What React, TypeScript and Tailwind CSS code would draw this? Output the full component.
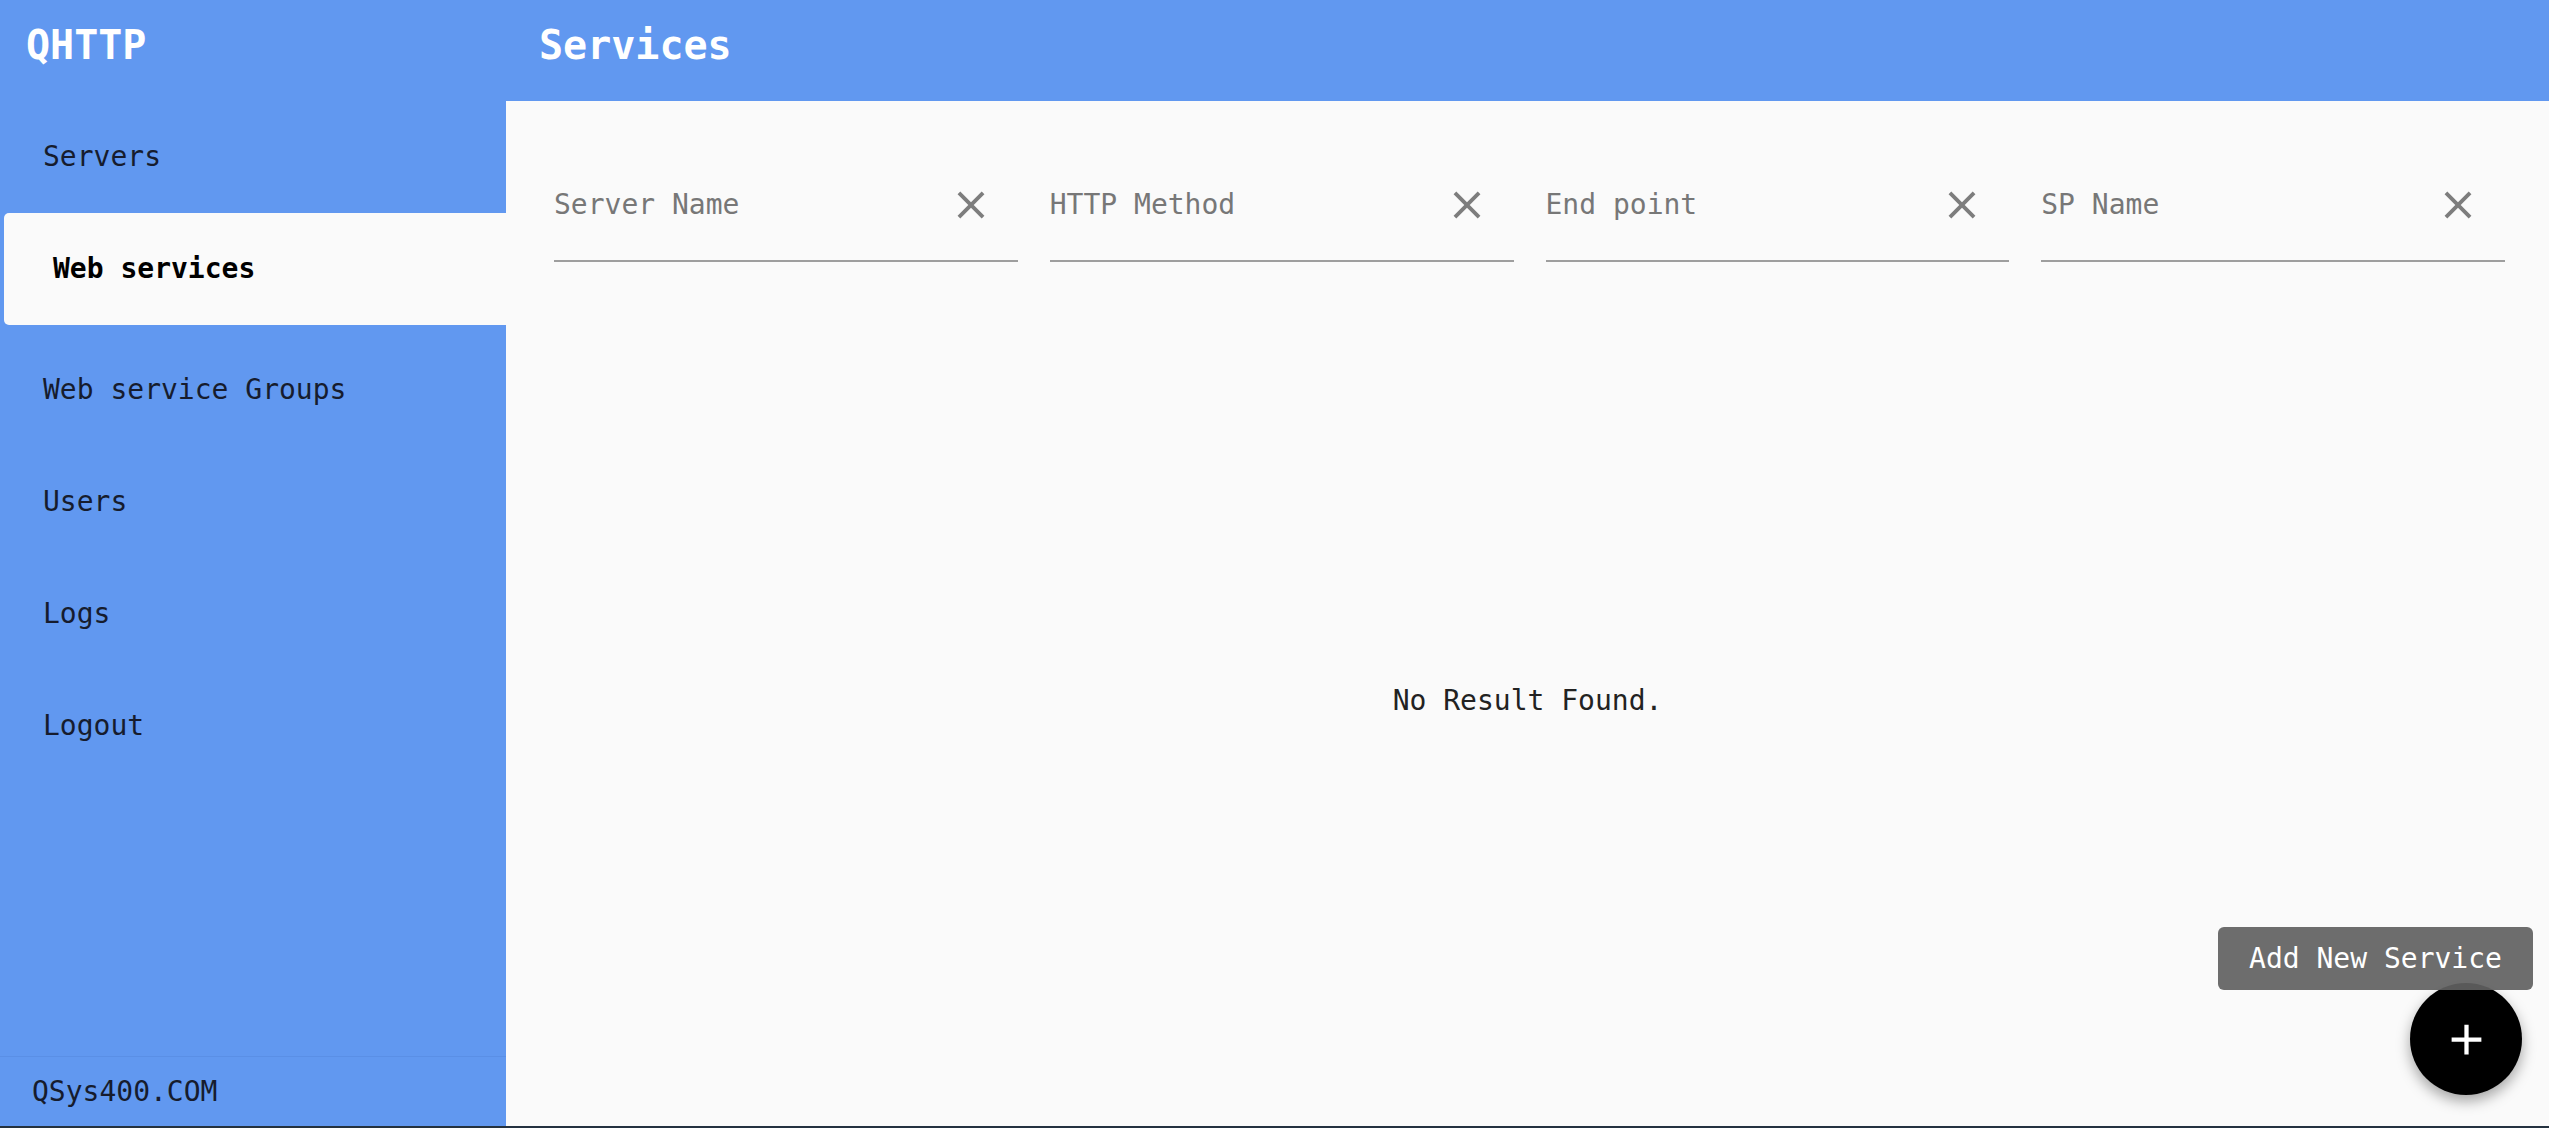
import React from "react";

const font = { fontFamily: '"DejaVu Sans Mono", "Liberation Mono", monospace' };

function CloseIcon() {
  return (
    <svg width="46" height="46" viewBox="0 0 24 24" className="shrink-0">
      <path
        fill="#7d7d7d"
        d="M19 6.41L17.59 5 12 10.59 6.41 5 5 6.41 10.59 12 5 17.59 6.41 19 12 13.41 17.59 19 19 17.59 13.41 12z"
      />
    </svg>
  );
}

function Field({ label }: { label: string }) {
  return (
    <div className="flex flex-col border-b-2 border-[#9e9e9e] pb-[38px]">
      <div className="flex h-[34px] items-center justify-between">
        <span className="text-[28px] leading-[34px] text-[#777777]">{label}</span>
        <div className="mr-[24px] flex items-center">
          <CloseIcon />
        </div>
      </div>
    </div>
  );
}

const navItems = ["Servers", "Web services", "Web service Groups", "Users", "Logs", "Logout"];

export default function App() {
  return (
    <div className="flex h-[1128px] w-full flex-col overflow-hidden bg-[#fafafa]" style={font}>
      <div className="flex h-[101px] shrink-0 bg-[#6198f0]">
        <div className="w-[506px] pl-[26px] pt-[25px]">
          <span className="text-[40px] font-bold leading-[40px] text-white">QHTTP</span>
        </div>
        <div className="pl-[33px] pt-[25px]">
          <span className="text-[40px] font-bold leading-[40px] text-white">Services</span>
        </div>
      </div>
      <div className="flex min-h-0 flex-1">
        <aside className="flex w-[506px] shrink-0 flex-col bg-[#6198f0]">
          <nav className="flex flex-col">
            {navItems.map((item) =>
              item === "Web services" ? (
                <div
                  key={item}
                  className="mb-[9px] ml-[4px] flex h-[112px] items-center rounded-l-[5px] bg-[#fafafa] pl-[49px] text-[28px] font-bold text-black"
                >
                  {item}
                </div>
              ) : (
                <div
                  key={item}
                  className="flex h-[112px] items-center pl-[43px] text-[28px] text-[#161c2e]"
                >
                  {item}
                </div>
              )
            )}
          </nav>
          <div className="flex-1" />
          <div className="flex h-[70px] items-center border-t border-[#5a8fe6] pl-[32px] text-[28px] text-[#161c2e]">
            QSys400.COM
          </div>
        </aside>
        <main className="relative flex min-w-0 flex-1 flex-col bg-[#fafafa] pl-[48px] pr-[44px] pt-[87px]">
          <div className="grid grid-cols-4 gap-x-[32px]">
            <Field label="Server Name" />
            <Field label="HTTP Method" />
            <Field label="End point" />
            <Field label="SP Name" />
          </div>
          <div className="flex flex-1 items-center justify-center pb-[2px] pt-[16px] pr-[4px]">
            <span className="text-[28px] text-[#222222]">No Result Found.</span>
          </div>
          <div className="absolute right-[16px] top-[826px] flex h-[63px] w-[315px] items-center justify-center rounded-[6px] bg-[rgba(97,97,97,0.92)] text-[28px] text-white z-20">
            Add New Service
          </div>
          <button className="absolute bottom-[31px] right-[27px] z-10 flex h-[112px] w-[112px] items-center justify-center rounded-full bg-black shadow-[0_6px_14px_rgba(0,0,0,0.35)]">
            <svg width="51" height="51" viewBox="0 0 24 24">
              <path fill="#ffffff" d="M19 13h-6v6h-2v-6H5v-2h6V5h2v6h6v2z" />
            </svg>
          </button>
        </main>
      </div>
      <div className="h-[2px] shrink-0 bg-[#243240]" />
    </div>
  );
}
